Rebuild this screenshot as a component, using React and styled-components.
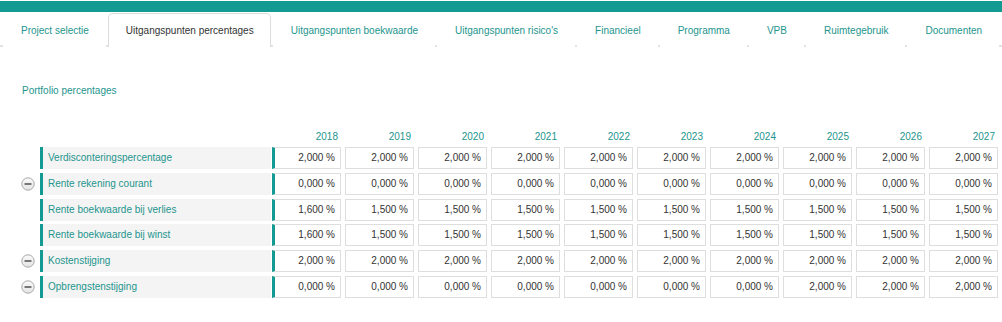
import React from 'react';
import styled, { createGlobalStyle } from 'styled-components';

const GlobalStyle = createGlobalStyle`
    body {
        margin: 0;
        background: #fff;
        font-family: "Liberation Sans", Arial, sans-serif;
        font-size: 10px;
    }
`;

const TEAL = '#139a92';
const TEAL_TEXT = '#1d958e';

const Page = styled.div`
    width: 1002px;
    height: 322px;
    overflow: hidden;
`;

const TopBar = styled.div`
    height: 11px;
    margin-top: 1px;
    background: ${TEAL};
`;

const TabBar = styled.nav`
    display: flex;
    height: 33px;
    padding-left: 3px;
    border-bottom: 2px solid #e2e2e2;
`;

const Tab = styled.div`
    display: flex;
    align-items: center;
    padding: 0 16px 0 17px;
    margin-right: 2px;
    margin-top: 1px;
    margin-bottom: -2px;
    color: ${(props) => (props.$active ? '#333' : TEAL_TEXT)};
    background: #fff;
    border: 1px solid ${(props) => (props.$active ? '#dcdcdc' : 'transparent')};
    border-bottom: none;
    border-radius: 5px 5px 0 0;
    white-space: nowrap;
`;

const Content = styled.div`
    padding: 37px 0 0 21px;
`;

const Title = styled.div`
    color: ${TEAL_TEXT};
    height: 14px;
    line-height: 14px;
    margin-bottom: 32px;
    margin-left: 1px;
`;

const Row = styled.div`
    display: flex;
    height: ${(props) => (props.$header ? '14px' : '22px')};
    margin-bottom: ${(props) => (props.$header ? '3px' : '3.8px')};
`;

const IconSlot = styled.div`
    width: 19px;
    display: flex;
    align-items: center;
`;

const Label = styled.div`
    width: 223px;
    padding-left: 5px;
    border-left: ${(props) => (props.$blank ? 'none' : `3px solid ${TEAL}`)};
    background: ${(props) => (props.$blank ? 'transparent' : '#f4f4f4')};
    color: ${TEAL_TEXT};
    line-height: 22px;
    margin-right: 1px;
    margin-left: ${(props) => (props.$blank ? '3px' : '0')};
`;

const Cells = styled.div`
    display: flex;
    gap: 4px;
`;

const Year = styled.div`
    width: 69px;
    box-sizing: border-box;
    text-align: right;
    padding-right: 3px;
    color: ${TEAL_TEXT};
    line-height: 14px;
`;

const Cell = styled.div`
    width: 69px;
    box-sizing: border-box;
    border: 1px solid #dedede;
    border-left: ${(props) => (props.$first ? `3px solid ${TEAL}` : '1px solid #dedede')};
    background: #fff;
    color: #333;
    text-align: right;
    padding-right: 5px;
    line-height: 20px;
`;

function MinusIcon() {
    return (
        <svg width="14" height="14" viewBox="0 0 14 14">
            <defs>
                <linearGradient id="mg" x1="0" y1="0" x2="0" y2="1">
                    <stop offset="0" stopColor="#fafafa" />
                    <stop offset="1" stopColor="#e4e4e4" />
                </linearGradient>
            </defs>
            <circle cx="7" cy="7" r="6.2" fill="url(#mg)" stroke="#a8a8a8" strokeWidth="1" />
            <rect x="3.5" y="6" width="7" height="2" rx="0.5" fill="#777" />
        </svg>
    );
}

const tabs = [
    'Project selectie',
    'Uitgangspunten percentages',
    'Uitgangspunten boekwaarde',
    "Uitgangspunten risico's",
    'Financieel',
    'Programma',
    'VPB',
    'Ruimtegebruik',
    'Documenten',
];

const years = [2018, 2019, 2020, 2021, 2022, 2023, 2024, 2025, 2026, 2027];

const rows = [
    { label: 'Verdisconteringspercentage', icon: false, values: Array(10).fill('2,000 %') },
    { label: 'Rente rekening courant', icon: true, values: Array(10).fill('0,000 %') },
    { label: 'Rente boekwaarde bij verlies', icon: false, values: ['1,600 %'].concat(Array(9).fill('1,500 %')) },
    { label: 'Rente boekwaarde bij winst', icon: false, values: ['1,600 %'].concat(Array(9).fill('1,500 %')) },
    { label: 'Kostenstijging', icon: true, values: Array(10).fill('2,000 %') },
    {
        label: 'Opbrengstenstijging',
        icon: true,
        values: Array(7).fill('0,000 %').concat(Array(3).fill('2,000 %')),
    },
];

export default function App() {
    return (
        <Page>
            <GlobalStyle />
            <TopBar />
            <TabBar>
                {tabs.map((t, i) => (
                    <Tab key={t} $active={i === 1}>{t}</Tab>
                ))}
            </TabBar>
            <Content>
                <Title>Portfolio percentages</Title>
                <Row $header>
                    <IconSlot />
                    <Label $blank />
                    <Cells>
                        {years.map((y) => (
                            <Year key={y}>{y}</Year>
                        ))}
                    </Cells>
                </Row>
                {rows.map((r) => (
                    <Row key={r.label}>
                        <IconSlot>{r.icon && <MinusIcon />}</IconSlot>
                        <Label>{r.label}</Label>
                        <Cells>
                            {r.values.map((v, i) => (
                                <Cell key={i} $first={i === 0}>{v}</Cell>
                            ))}
                        </Cells>
                    </Row>
                ))}
            </Content>
        </Page>
    );
}
